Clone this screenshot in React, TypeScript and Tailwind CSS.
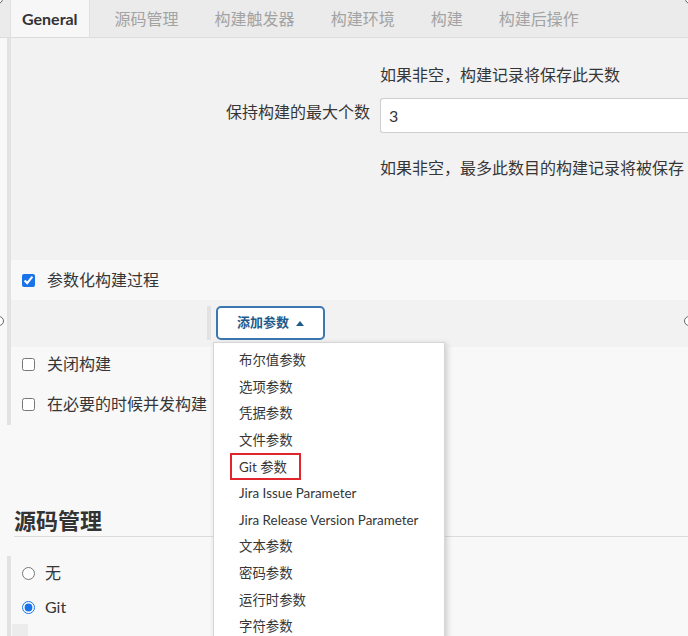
import React from "react";

const tabs = ["General", "源码管理", "构建触发器", "构建环境", "构建", "构建后操作"];

const paramTypes = [
  "布尔值参数",
  "选项参数",
  "凭据参数",
  "文件参数",
  "Git 参数",
  "Jira Issue Parameter",
  "Jira Release Version Parameter",
  "文本参数",
  "密码参数",
  "运行时参数",
  "字符参数",
];

function Handle({ className }: { className: string }) {
  return <div className={`absolute w-[10px] h-[10px] rounded-full border border-[#666] bg-white ${className}`} />;
}

export default function App() {
  return (
    <div className="relative w-[688px] h-[636px] overflow-hidden bg-[#f8f8f8] text-[#363636] font-[Lato,'Noto_Sans_CJK_SC',sans-serif]">
      {/* Tabs */}
      <div className="flex h-[38px] items-stretch gap-[14px] pl-[10px] bg-[#ebebeb] border-b border-[#dcdcdc]">
        {tabs.map((t, i) => (
          <div
            key={t}
            className={
              i === 0
                ? "flex items-center px-[11px] bg-[#f7f7f7] border-x border-[#e0e0e0] text-[16px] font-bold text-[#333]"
                : "flex items-center px-[11px] text-[16px] text-[#a3a3a3]"
            }
          >
            {t}
          </div>
        ))}
      </div>

      {/* General section */}
      <div className="ml-[7px] border-l-4 border-[#e2e2e2]">
        <div className="h-[222px] bg-[#f2f2f2] pt-[25px]">
          <div className="pl-[369px] text-[16px] leading-[24px] whitespace-nowrap">如果非空，构建记录将保存此天数</div>
          <div className="mt-[11px] flex items-start">
            <div className="w-[359px] mt-[2px] text-right text-[16px] leading-[24px] whitespace-nowrap">保持构建的最大个数</div>
            <div className="ml-[10px] flex-1 h-[35px] bg-white border border-[#cfcfcf] rounded-l-[3px] border-r-0 flex items-center pl-[8px] text-[16px]">
              3
            </div>
          </div>
          <div className="mt-[23px] pl-[369px] text-[16px] leading-[24px] whitespace-nowrap">如果非空，最多此数目的构建记录将被保存</div>
        </div>

        <div className="h-[40px] bg-[#f8f8f8] flex items-center pl-[11px] gap-[12px]">
          <input type="checkbox" defaultChecked className="w-[13px] h-[13px] accent-[#1a73e8]" />
          <span className="text-[16px]">参数化构建过程</span>
        </div>

        <div className="h-[47px] bg-[#f2f2f2] flex items-start pt-[6px] pl-[196px]">
          <div className="w-[4px] h-[34px] bg-[#e2e2e2]" />
          <button className="ml-[5px] w-[109px] h-[34px] border-2 border-[#3b78b0] rounded-[5px] bg-white flex items-center justify-center gap-[7px] text-[13px] font-semibold text-[#1f5a8c]">
            添加参数
            <svg width="8" height="5" viewBox="0 0 8 5">
              <polygon points="4,0 8,5 0,5" fill="#1f5a8c" />
            </svg>
          </button>
        </div>

        <div className="pb-[1px]">
          <div className="h-[34px] flex items-center pl-[11px] gap-[12px]">
            <input type="checkbox" className="w-[13px] h-[13px]" />
            <span className="text-[16px]">关闭构建</span>
          </div>
          <div className="mt-[3px] h-[40px] flex items-center pl-[11px] gap-[12px]">
            <input type="checkbox" className="w-[13px] h-[13px]" />
            <span className="text-[16px]">在必要的时候并发构建</span>
          </div>
        </div>
      </div>

      {/* Source code management */}
      <div className="mt-[81px] ml-[14px] border-b border-[#dcdcdc] text-[22px] leading-[30px] font-bold text-[#333]">源码管理</div>
      <div className="mt-[19px] ml-[7px] border-l-4 border-[#e2e2e2]">
        <div className="h-[34px] flex items-center pl-[11px] gap-[10px]">
          <input type="radio" name="scm" className="w-[13px] h-[13px]" />
          <span className="text-[16px]">无</span>
        </div>
        <div className="h-[34px] flex items-center pl-[11px] gap-[10px]">
          <input type="radio" name="scm" defaultChecked className="w-[13px] h-[13px] accent-[#1a73e8]" />
          <span className="text-[16px]">Git</span>
        </div>
        <div className="ml-[1px] w-[16px] h-[14px] bg-[#ececec]" />
      </div>

      {/* Dropdown menu */}
      <div className="absolute left-[213px] top-[342px] w-[232px] h-[300px] bg-white border border-[#d6d6d6] shadow-[2px_2px_6px_rgba(0,0,0,0.18)] pt-[4px]">
        {paramTypes.map((p) => (
          <div key={p} className="relative h-[26.6px] flex items-center pl-[25px] text-[13.4px] whitespace-nowrap">
            {p}
            {p === "Git 参数" && (
              <div className="absolute left-[16px] top-0 w-[71px] h-[27px] border-2 border-[#e0262c]" />
            )}
          </div>
        ))}
      </div>

      <Handle className="-left-[7px] -top-[6px]" />
      <Handle className="-right-[7px] -top-[6px]" />
      <Handle className="-left-[6px] top-[316px]" />
      <Handle className="-right-[6px] top-[316px]" />
    </div>
  );
}
